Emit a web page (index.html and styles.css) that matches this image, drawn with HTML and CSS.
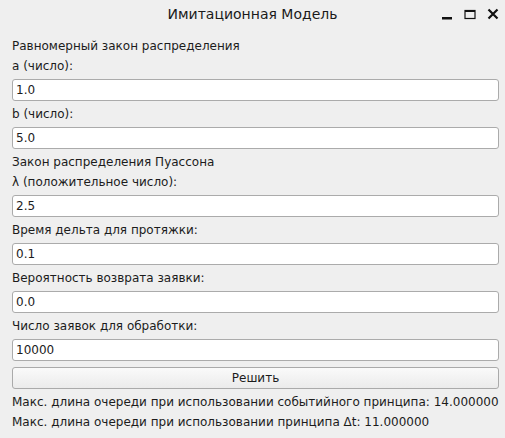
FILE: index.html
```html
<!DOCTYPE html>
<html>
<head>
<meta charset="utf-8">
<link rel="stylesheet" href="styles.css">
</head>
<body>
<div class="window">
  <div class="titlebar">
    <div class="title">Имитационная Модель</div>
    <div class="controls">
      <svg class="ctl" width="12" height="12" viewBox="0 0 12 12"><rect x="1" y="9" width="10" height="2.5" fill="#111"/></svg>
      <svg class="ctl" width="12" height="12" viewBox="0 0 12 12"><rect x="1" y="2.5" width="10" height="8" fill="none" stroke="#111" stroke-width="1.2"/><rect x="1" y="2" width="10" height="2" fill="#111"/></svg>
      <svg class="ctl" width="12" height="12" viewBox="0 0 12 12"><path d="M1.5 1.5 L10.5 10.5 M10.5 1.5 L1.5 10.5" stroke="#111" stroke-width="2.2"/></svg>
    </div>
  </div>
  <div class="content">
    <div class="label">Равномерный закон распределения</div>
    <div class="label">a (число):</div>
    <div class="field">1.0</div>
    <div class="label">b (число):</div>
    <div class="field">5.0</div>
    <div class="label">Закон распределения Пуассона</div>
    <div class="label">λ (положительное число):</div>
    <div class="field">2.5</div>
    <div class="label">Время дельта для протяжки:</div>
    <div class="field">0.1</div>
    <div class="label">Вероятность возврата заявки:</div>
    <div class="field">0.0</div>
    <div class="label">Число заявок для обработки:</div>
    <div class="field">10000</div>
    <div class="button">Решить</div>
    <div class="label">Макс. длина очереди при использовании событийного принципа: 14.000000</div>
    <div class="label">Макс. длина очереди при использовании принципа Δt: 11.000000</div>
  </div>
</div>
</body>
</html>
```

FILE: styles.css
```css
html, body {
  margin: 0;
  padding: 0;
  background: #efefef;
}
.window {
  width: 505px;
  height: 438px;
  background: #efefef;
  font-family: "DejaVu Sans", sans-serif;
  font-size: 12px;
  color: #1c1c1c;
  display: flex;
  flex-direction: column;
}
.titlebar {
  height: 30px;
  position: relative;
  display: flex;
  align-items: center;
  justify-content: center;
}
.title {
  font-size: 14px;
  color: #1a1a1a;
  margin-top: -2px;
}
.controls {
  position: absolute;
  right: 6px;
  top: 8px;
  display: flex;
  gap: 11px;
}
.ctl {
  display: block;
}
.content {
  padding: 9px 6px 0 12px;
  display: flex;
  flex-direction: column;
  gap: 6px;
}
.label {
  height: 14px;
  line-height: 14px;
  white-space: nowrap;
}
.field {
  height: 22px;
  box-sizing: border-box;
  background: #fff;
  border: 1px solid #ababab;
  border-radius: 3px;
  padding: 0 3px;
  line-height: 20px;
}
.button {
  height: 22px;
  box-sizing: border-box;
  border: 1px solid #aaaaaa;
  border-radius: 3px;
  background: linear-gradient(#fafafa, #ebebeb);
  text-align: center;
  line-height: 20px;
}
```
